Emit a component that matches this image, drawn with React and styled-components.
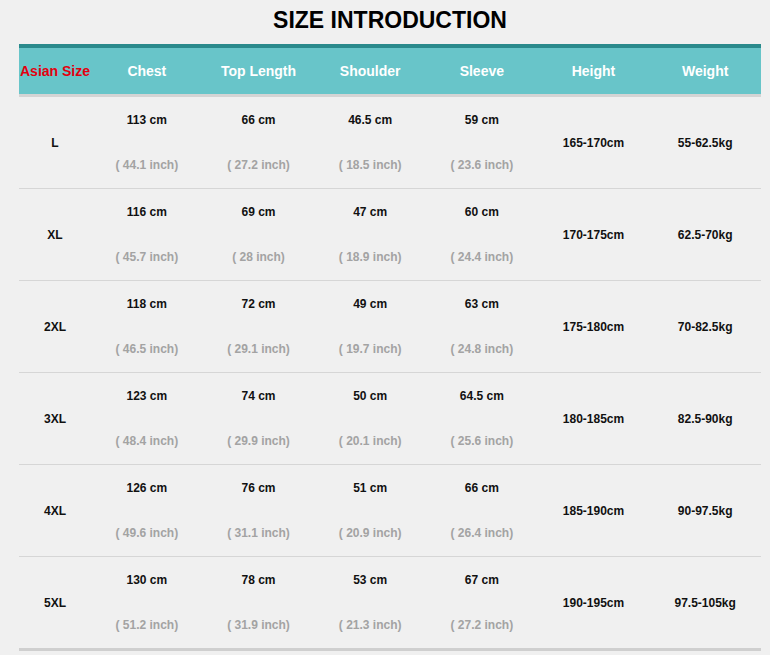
import styled, { createGlobalStyle } from 'styled-components';

const Global = createGlobalStyle`
	body {
		margin: 0;
		background: #f0f0f0;
		font-family: "Liberation Sans", Arial, sans-serif;
	}
`;

const Page = styled.div`
	width: 770px;
	height: 655px;
	overflow: hidden;
	padding: 0 9px 0 19px;
	box-sizing: border-box;
`;

const Title = styled.h1`
	margin: 0;
	height: 44px;
	line-height: 40px;
	text-align: center;
	font-size: 23px;
	font-weight: 700;
	color: #000;
`;

const Grid = styled.div`
	display: grid;
	grid-template-columns: 72px repeat(6, 1fr);
`;

const Head = styled(Grid)`
	height: 46px;
	background: #68c5c9;
	border-top: 4px solid #2b8a8c;
	border-bottom: 3px solid #d4d4d4;
`;

const HeadCell = styled.div`
	display: flex;
	align-items: center;
	justify-content: center;
	font-size: 14px;
	font-weight: 700;
	color: ${(p) => (p.$red ? '#e3000f' : '#fff')};
	white-space: nowrap;
`;

const Row = styled(Grid)`
	height: 91px;
	border-bottom: ${(p) => (p.$last ? '3px solid #cfcfcf' : '1px solid #d6d6d6')};
`;

const Cell = styled.div`
	display: flex;
	align-items: center;
	justify-content: center;
	font-size: 12px;
	font-weight: 700;
	color: #111;
`;

const Stack = styled.div`
	display: flex;
	flex-direction: column;
	align-items: center;
	justify-content: space-between;
	padding: 16px 0 16px;
	font-size: 12px;
	font-weight: 700;
`;

const Cm = styled.span`
	color: #111;
`;

const Inch = styled.span`
	color: #a3a3a3;
`;

const heads = ['Chest', 'Top Length', 'Shoulder', 'Sleeve', 'Height', 'Weight'];

const rows = [
	['L', ['113', '44.1'], ['66', '27.2'], ['46.5', '18.5'], ['59', '23.6'], '165-170cm', '55-62.5kg'],
	['XL', ['116', '45.7'], ['69', '28'], ['47', '18.9'], ['60', '24.4'], '170-175cm', '62.5-70kg'],
	['2XL', ['118', '46.5'], ['72', '29.1'], ['49', '19.7'], ['63', '24.8'], '175-180cm', '70-82.5kg'],
	['3XL', ['123', '48.4'], ['74', '29.9'], ['50', '20.1'], ['64.5', '25.6'], '180-185cm', '82.5-90kg'],
	['4XL', ['126', '49.6'], ['76', '31.1'], ['51', '20.9'], ['66', '26.4'], '185-190cm', '90-97.5kg'],
	['5XL', ['130', '51.2'], ['78', '31.9'], ['53', '21.3'], ['67', '27.2'], '190-195cm', '97.5-105kg'],
];

export default function App() {
	return (
		<Page>
			<Global />
			<Title>SIZE INTRODUCTION</Title>
			<Head>
				<HeadCell $red>Asian Size</HeadCell>
				{heads.map((h) => (
					<HeadCell key={h}>{h}</HeadCell>
				))}
			</Head>
			{rows.map(([size, ...rest], i) => (
				<Row key={size} $last={i === rows.length - 1}>
					<Cell>{size}</Cell>
					{rest.map((v, j) =>
						Array.isArray(v) ? (
							<Stack key={j}>
								<Cm>{v[0]} cm</Cm>
								<Inch>( {v[1]} inch)</Inch>
							</Stack>
						) : (
							<Cell key={j}>{v}</Cell>
						)
					)}
				</Row>
			))}
		</Page>
	);
}
